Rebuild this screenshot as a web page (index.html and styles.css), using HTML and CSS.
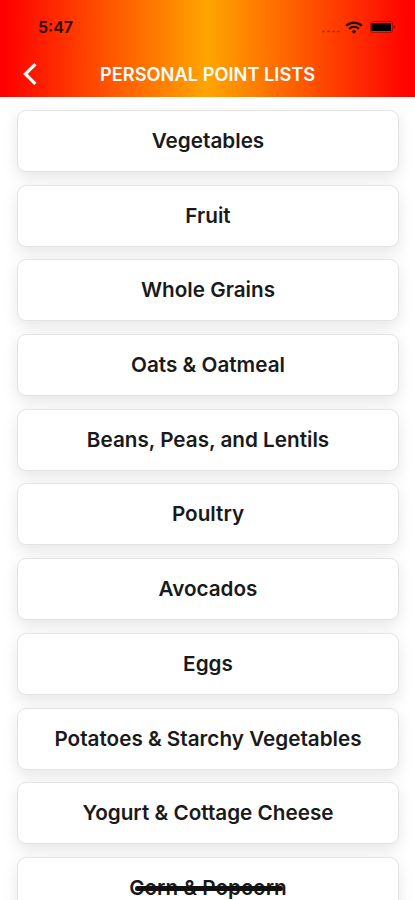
FILE: index.html
```html
<!DOCTYPE html>
<html lang="en">
<head>
    <meta charset="UTF-8">
    <meta name="viewport" content="width=device-width, initial-scale=1.0">
    <title>Personal Point Lists</title>
    <link rel="stylesheet" href="styles.css">
</head>
<body>

    <!-- Header with status bar and title -->
    <header class="header">
        <div class="status-bar">
            <span class="time">5:47</span>
            <div class="status-icons">
                <svg class="signal" width="19" height="3" viewBox="0 0 19 3">
                    <path d="M1 1.5h3M6 1.5h3M11 1.5h3M16 1.5h3" stroke="#000" stroke-opacity="0.3" stroke-width="1.6"/>
                </svg>
                <svg class="wifi" width="18" height="13" viewBox="0 0 18 13" fill="none" stroke="#1c0500" stroke-width="2.2">
                    <path d="M1.2 4.8a11 11 0 0 1 15.6 0M4.1 7.8a6.9 6.9 0 0 1 9.8 0"/>
                    <path d="M9 12.8L6.6 10.4a3.4 3.4 0 0 1 4.8 0z" fill="#1c0500" stroke="none"/>
                </svg>
                <svg class="battery" width="26" height="12" viewBox="0 0 26 12">
                    <rect x="0.5" y="0.5" width="22" height="11" rx="2" fill="none" stroke="#000" stroke-opacity="0.3"/>
                    <rect x="1.5" y="2" width="19.5" height="8" rx="0.5" fill="#000"/>
                    <path d="M23.5 3.8l1.9 2.2-1.9 2.2z" fill="#000" fill-opacity="0.35"/>
                </svg>
            </div>
        </div>
        <div class="nav-bar">
            <svg class="back" width="14" height="24" viewBox="0 0 14 24">
                <path d="M12.4 2.2L2.4 12l10 9.8" fill="none" stroke="#fff" stroke-width="3.2"/>
            </svg>
            <h1>PERSONAL POINT LISTS</h1>
        </div>
    </header>

    <!-- Food categories -->
    <main class="list">
        <div class="card">Vegetables</div>
        <div class="card">Fruit</div>
        <div class="card">Whole Grains</div>
        <div class="card">Oats &amp; Oatmeal</div>
        <div class="card">Beans, Peas, and Lentils</div>
        <div class="card">Poultry</div>
        <div class="card">Avocados</div>
        <div class="card">Eggs</div>
        <div class="card">Potatoes &amp; Starchy Vegetables</div>
        <div class="card">Yogurt &amp; Cottage Cheese</div>
        <div class="card">Corn &amp; Popcorn</div>
    </main>

    <div class="home-indicator"></div>

</body>
</html>
```

FILE: styles.css
```css
body {
    font-family: Inter, "Liberation Sans", sans-serif;
    background-color: #fff;
    margin: 0;
    height: 900px;
    overflow: hidden;
    position: relative;
}

.header {
    height: 97px;
    background: linear-gradient(to right, #ff0000 1%, #ffa500 50%, #ff0000 99%);
}

.status-bar {
    display: flex;
    justify-content: space-between;
    align-items: center;
    height: 54px;
    padding: 0 19px 0 38px;
}

.time {
    font-size: 16px;
    font-weight: 600;
    color: #2a0600;
}

.status-icons {
    display: flex;
    align-items: center;
}

.signal {
    margin: 8px 5px 0 0;
}

.wifi {
    margin-right: 7px;
}

.nav-bar {
    display: flex;
    align-items: center;
    height: 40px;
    padding-left: 23px;
}

.nav-bar h1 {
    margin: 0 0 0 63px;
    font-size: 18.25px;
    font-weight: 600;
    color: #fff;
    white-space: nowrap;
}

.list {
    display: flex;
    flex-direction: column;
    gap: 12.7px;
    padding: 13px 16px 0 17px;
}

.card {
    display: flex;
    align-items: center;
    justify-content: center;
    flex-shrink: 0;
    box-sizing: border-box;
    height: 62px;
    padding-bottom: 1px;
    border: 1px solid #e4e4e4;
    border-radius: 9px;
    background-color: #fff;
    box-shadow: 0 6px 16px rgba(0, 0, 0, 0.1);
    color: #1a1a1a;
    font-size: 20.7px;
    font-weight: 600;
}

/* Home bar sits over the list */
.home-indicator {
    position: absolute;
    left: 135px;
    bottom: 9px;
    width: 148px;
    height: 5px;
    border-radius: 3px;
    background-color: #111;
}
```
